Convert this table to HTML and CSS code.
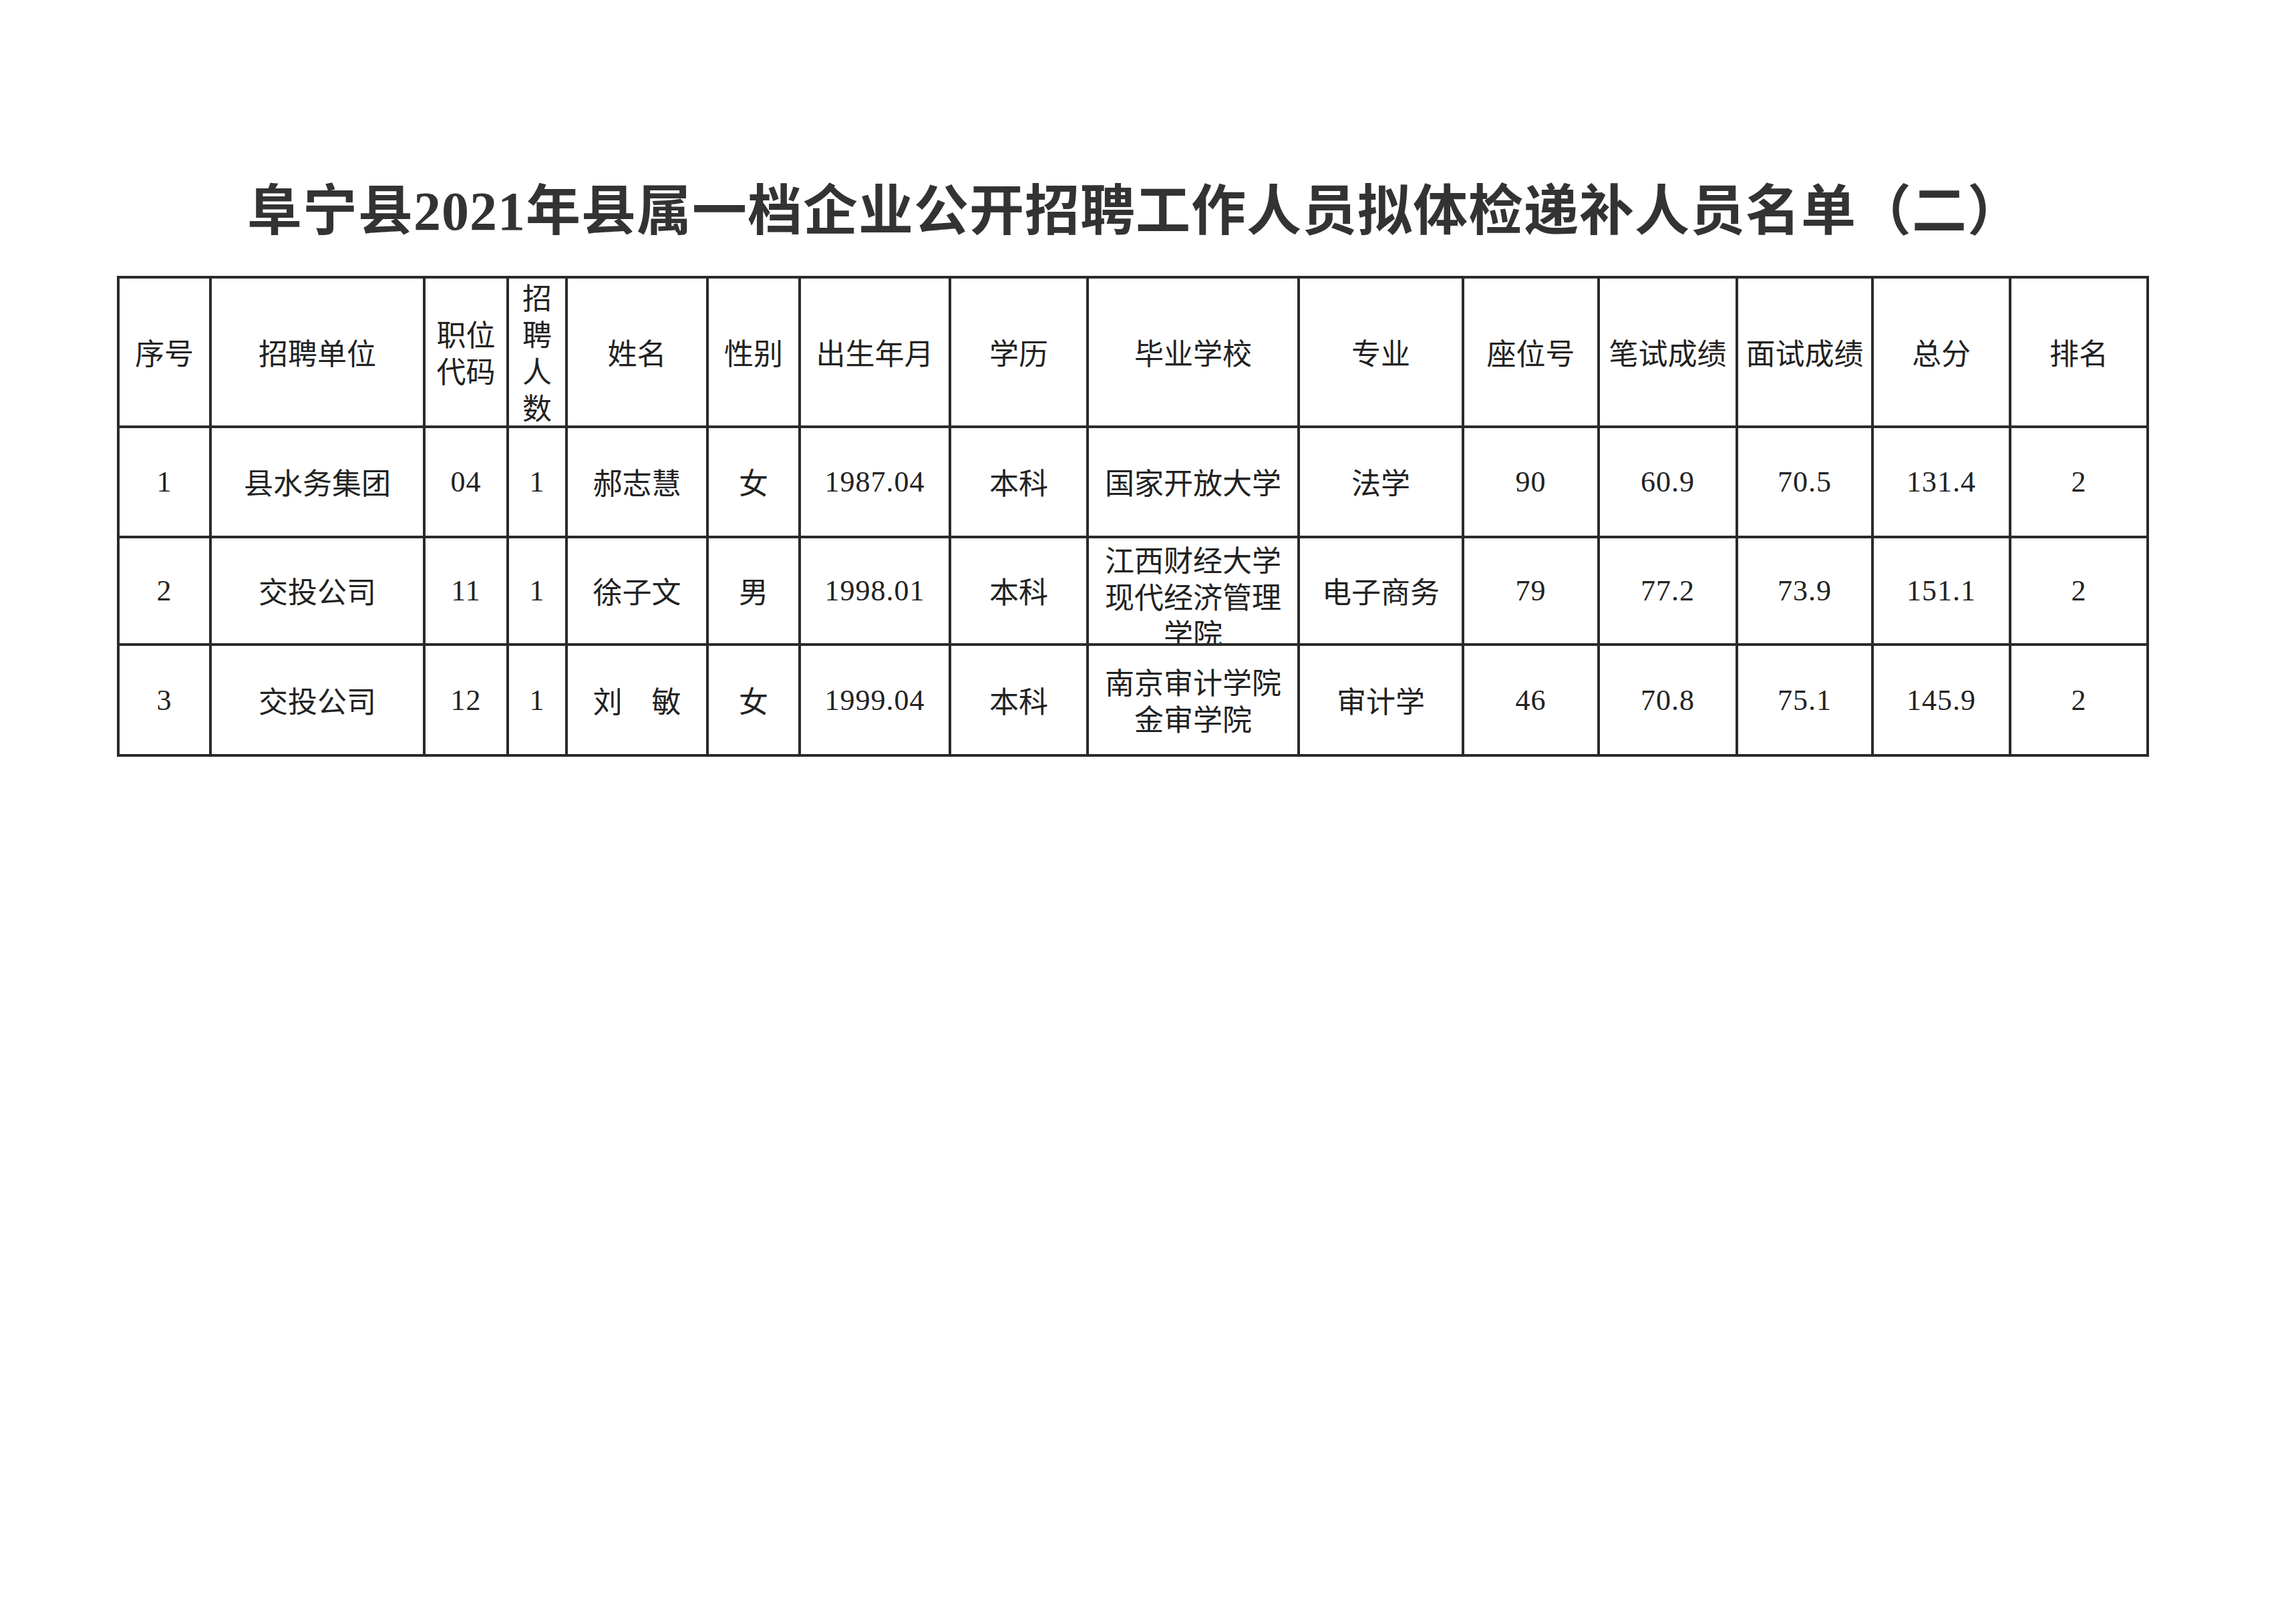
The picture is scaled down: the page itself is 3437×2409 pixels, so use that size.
FILE: index.html
```html
<!DOCTYPE html>
<html lang="zh-CN">
<head>
<meta charset="utf-8">
<title>阜宁县2021年县属一档企业公开招聘工作人员拟体检递补人员名单（二）</title>
<link rel="stylesheet" href="styles.css">
</head>
<body>
<div class="page">
  <h1 class="title">阜宁县<span class="num">2021</span>年县属一档企业公开招聘工作人员拟体检递补人员名单（二）</h1>
  <table class="list">
    <colgroup>
      <col class="c1"><col class="c2"><col class="c3"><col class="c4"><col class="c5">
      <col class="c6"><col class="c7"><col class="c8"><col class="c9"><col class="c10">
      <col class="c11"><col class="c12"><col class="c13"><col class="c14"><col class="c15">
    </colgroup>
    <thead>
      <tr class="head">
        <th>序号</th>
        <th>招聘单位</th>
        <th class="two">职位<br>代码</th>
        <th class="stack">招<br>聘<br>人<br>数</th>
        <th>姓名</th>
        <th>性别</th>
        <th>出生年月</th>
        <th>学历</th>
        <th>毕业学校</th>
        <th>专业</th>
        <th>座位号</th>
        <th>笔试成绩</th>
        <th>面试成绩</th>
        <th>总分</th>
        <th>排名</th>
      </tr>
    </thead>
    <tbody>
      <tr class="r1">
        <td class="n">1</td>
        <td>县水务集团</td>
        <td class="n">04</td>
        <td class="n">1</td>
        <td>郝志慧</td>
        <td>女</td>
        <td class="n">1987.04</td>
        <td>本科</td>
        <td>国家开放大学</td>
        <td>法学</td>
        <td class="n">90</td>
        <td class="n">60.9</td>
        <td class="n">70.5</td>
        <td class="n">131.4</td>
        <td class="n">2</td>
      </tr>
      <tr class="r2">
        <td class="n">2</td>
        <td>交投公司</td>
        <td class="n">11</td>
        <td class="n">1</td>
        <td>徐子文</td>
        <td>男</td>
        <td class="n">1998.01</td>
        <td>本科</td>
        <td class="school"><div class="clip">江西财经大学<br>现代经济管理<br>学院</div></td>
        <td>电子商务</td>
        <td class="n">79</td>
        <td class="n">77.2</td>
        <td class="n">73.9</td>
        <td class="n">151.1</td>
        <td class="n">2</td>
      </tr>
      <tr class="r3">
        <td class="n">3</td>
        <td>交投公司</td>
        <td class="n">12</td>
        <td class="n">1</td>
        <td>刘　敏</td>
        <td>女</td>
        <td class="n">1999.04</td>
        <td>本科</td>
        <td class="two">南京审计学院<br>金审学院</td>
        <td>审计学</td>
        <td class="n">46</td>
        <td class="n">70.8</td>
        <td class="n">75.1</td>
        <td class="n">145.9</td>
        <td class="n">2</td>
      </tr>
    </tbody>
  </table>
</div>
</body>
</html>
```

FILE: styles.css
```css
html, body {
  margin: 0;
  padding: 0;
  background: #ffffff;
}

.page {
  padding-top: 268px;
  color: #222222;
  font-family: "Liberation Serif", "Noto Sans CJK SC", serif;
}

.title {
  margin: 0 0 0 175px;
  width: 3038px;
  padding-left: 10px;
  box-sizing: border-box;
  text-align: center;
  font-family: "Noto Sans CJK SC", sans-serif;
  font-weight: 700;
  font-size: 82px;
  line-height: 82px;
  letter-spacing: 1px;
  color: #333333;
  white-space: nowrap;
}

.title .num {
  font-family: "Liberation Serif", serif;
  font-weight: 700;
}

.list {
  margin: 55px 0 0 175px;
  width: 3038px;
  table-layout: fixed;
  border-collapse: collapse;
  font-size: 44px;
}

.c1 { width: 138px; }
.c2 { width: 320px; }
.c3 { width: 125px; }
.c4 { width: 88px; }
.c5 { width: 211px; }
.c6 { width: 138px; }
.c7 { width: 225px; }
.c8 { width: 206px; }
.c9 { width: 316px; }
.c10 { width: 246px; }
.c11 { width: 203px; }
.c12 { width: 207px; }
.c13 { width: 203px; }
.c14 { width: 206px; }
.c15 { width: 206px; }

.list th,
.list td {
  border: 4px solid #2a2a2a;
  padding: 0;
  text-align: center;
  vertical-align: middle;
  font-weight: 400;
  line-height: 55px;
  white-space: nowrap;
  font-family: "Noto Sans CJK SC", sans-serif;
}

.list td.n {
  font-family: "Liberation Serif", serif;
  letter-spacing: 1px;
}

.head { height: 221px; }
.r1 { height: 165px; }
.r2 { height: 161px; }
.r3 { height: 166px; }

.list .school {
  vertical-align: top;
}

.clip {
  height: 157px;
  overflow: hidden;
  padding-top: 4px;
  box-sizing: border-box;
  line-height: 55px;
}
```
